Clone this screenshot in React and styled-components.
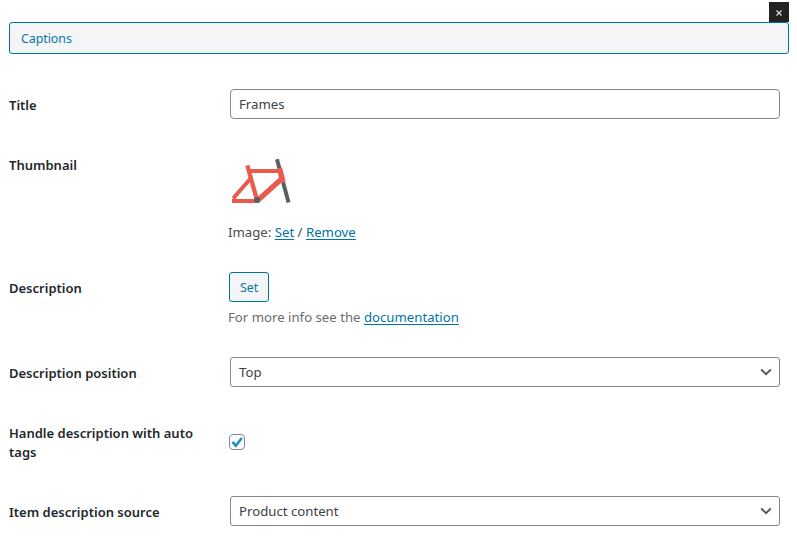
import React from 'react';
import styled, { createGlobalStyle } from 'styled-components';

const Global = createGlobalStyle`
  * { box-sizing: border-box; }
  body { margin: 0; background: #fff; overflow: hidden; }
  body, input, button {
    font-family: "Noto Sans", "Open Sans", sans-serif;
    font-size: 13.2px;
  }
`;

const Panel = styled.main`
  width: 797px;
  height: 537px;
  padding: 2px 8px 0 9px;
  overflow: hidden;
  color: #444;
`;

const Toolbar = styled.div`
  display: flex;
  justify-content: flex-end;
  height: 20px;
`;

const CloseButton = styled.button`
  display: flex;
  align-items: center;
  justify-content: center;
  width: 20px;
  height: 20px;
  padding: 1px 0 0;
  border: 0;
  background: #222;
`;

const CaptionsButton = styled.button`
  display: block;
  width: 780px;
  height: 32px;
  margin-bottom: 20px;
  padding: 1px 11px 0;
  border: 1px solid #0071a1;
  border-radius: 3px;
  background: #f3f5f6;
  color: #0a78a8;
  font-size: 12.5px;
  letter-spacing: -0.1px;
  line-height: 29px;
  text-align: left;
`;

const SetButton = styled(CaptionsButton)`
  width: 40px;
  height: 30px;
  margin: 0 0 0 1px;
  padding: 1px 0 0;
  line-height: 27px;
  text-align: center;
`;

const Row = styled.section`
  display: grid;
  grid-template-columns: 219px 552px;
  height: ${p => p.$height}px;
`;

const Label = styled.div`
  width: 200px;
  padding-top: 22px;
  color: #23282d;
  font-size: 13px;
  font-weight: 600;
  line-height: 19px;
`;

const Cell = styled.div`
  padding-top: ${p => p.$top || 15}px;
`;

const TextInput = styled.input`
  display: block;
  width: 550px;
  height: 30px;
  margin-left: 2px;
  padding: 0 8px;
  border: 1px solid #7e8993;
  border-radius: 4px;
  outline: 0;
  background: #fff;
  color: #3c4146;
`;

const Select = styled.div`
  display: flex;
  align-items: center;
  justify-content: space-between;
  width: 550px;
  height: 30px;
  margin-left: 2px;
  padding: 0 7px 0 8px;
  border: 1px solid #7e8993;
  border-radius: 3px;
  color: #3c4146;
  line-height: 28px;
`;

const Line = styled.p`
  margin: ${p => p.$gap}px 0 0;
  color: ${p => p.$color || '#4c4c4c'};
  line-height: 20px;
`;

const Link = styled.a`
  color: #0073aa;
  text-decoration: underline;
  text-decoration-thickness: 1px;
  text-underline-offset: 2px;
`;

const Checkbox = styled.span`
  display: flex;
  align-items: center;
  justify-content: center;
  width: 16px;
  height: 16px;
  margin-left: 1px;
  border: 1px solid #7e8993;
  border-radius: 4px;
`;

const Picture = styled.svg`
  display: block;
`;

const Chevron = () => (
  <Picture width="12" height="8" viewBox="0 0 12 8">
    <path d="M1.2 1.5 6 6.2 10.8 1.5" fill="none" stroke="#555" strokeWidth="1.9" />
  </Picture>
);

const BikeFrame = () => (
  <Picture width="64" height="56" viewBox="228 154 64 56">
    <path d="M277 159.3 280.3 172M283 182l5.6 20.5" fill="none" stroke="#5c605d" strokeWidth="4" />
    <g fill="none" stroke="#eb5b4b">
      <path d="M247.3 165.3 257 200" strokeWidth="4.3" />
      <path d="M249 171H281" strokeWidth="4" />
      <path d="M251 178 233.5 198" strokeWidth="4" />
      <path d="M232 201H257" strokeWidth="4" />
      <path d="M257 201 282 178.5" strokeWidth="5.2" />
      <path d="M279.4 168 283 182" strokeWidth="5.4" />
    </g>
    <path d="m232 197.5 3-1 .5 2.5-1.3 1.3H232l1.2-1.3z" fill="#eb5b4b" />
    <circle cx="257" cy="200" r="3.1" fill="#5c605d" />
  </Picture>
);

export default function App() {
  return (
    <>
      <Global />
      <Panel>
        <Toolbar>
          <CloseButton aria-label="Close">
            <Picture width="8" height="8" viewBox="0 0 8 8">
              <path d="m1.5 1.5 5 5M6.5 1.5l-5 5" stroke="#ddd" strokeWidth="1.2" />
            </Picture>
          </CloseButton>
        </Toolbar>
        <CaptionsButton>Captions</CaptionsButton>
        <Row $height={60}>
          <Label>Title</Label>
          <Cell><TextInput defaultValue="Frames" /></Cell>
        </Row>
        <Row $height={123}>
          <Label>Thumbnail</Label>
          <Cell $top={20}>
            <BikeFrame />
            <Line $gap={12}>Image: <Link>Set</Link> / <Link>Remove</Link></Line>
          </Cell>
        </Row>
        <Row $height={85}>
          <Label>Description</Label>
          <Cell>
            <SetButton>Set</SetButton>
            <Line $gap={5} $color="#6c6c6c">For more info see the <Link>documentation</Link></Line>
          </Cell>
        </Row>
        <Row $height={60}>
          <Label>Description position</Label>
          <Cell><Select>Top<Chevron /></Select></Cell>
        </Row>
        <Row $height={79}>
          <Label>Handle description with auto tags</Label>
          <Cell $top={32}>
            <Checkbox role="checkbox" aria-checked="true">
              <Picture width="12" height="12" viewBox="0 0 12 12">
                <path d="m1.4 5.8 3.4 4L10.8 2" fill="none" stroke="#1e8cbe" strokeWidth="2.6" />
              </Picture>
            </Checkbox>
          </Cell>
        </Row>
        <Row $height={56}>
          <Label>Item description source</Label>
          <Cell><Select>Product content<Chevron /></Select></Cell>
        </Row>
      </Panel>
    </>
  );
}
